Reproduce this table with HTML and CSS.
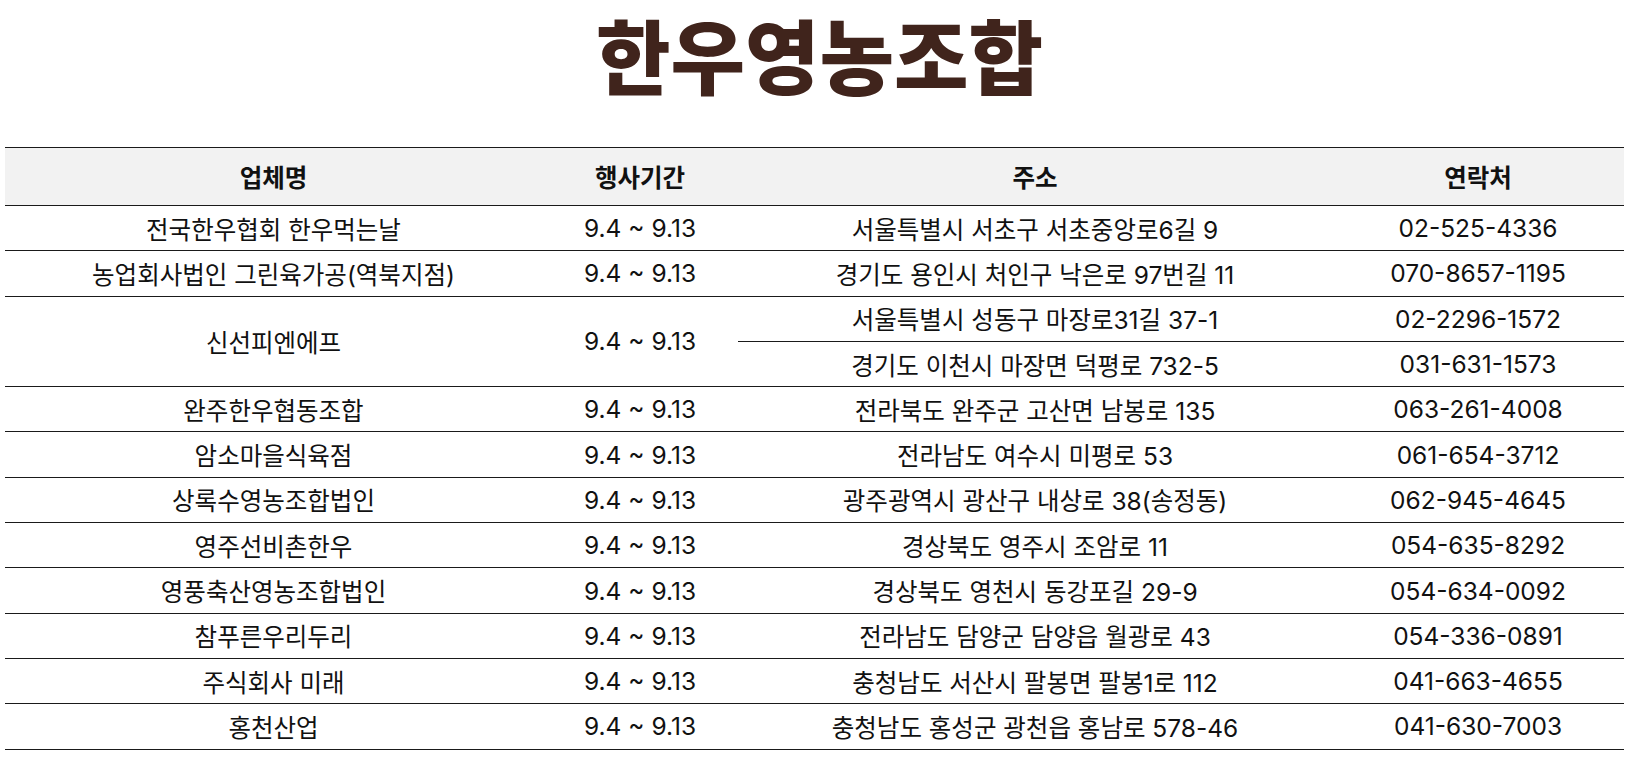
FILE: index.html
```html
<!DOCTYPE html>
<html lang="ko">
<head>
<meta charset="utf-8">
<title>한우영농조합</title>
<link rel="stylesheet" href="styles.css">
</head>
<body>
<div class="page">
  <h1 class="title">한우영농조합</h1>
  <table class="list">
    <colgroup>
      <col class="c-name">
      <col class="c-date">
      <col class="c-addr">
      <col class="c-tel">
    </colgroup>
    <thead>
      <tr><th>업체명</th><th>행사기간</th><th>주소</th><th>연락처</th></tr>
    </thead>
    <tbody>
      <tr><td>전국한우협회 한우먹는날</td><td>9.4 ~ 9.13</td><td>서울특별시 서초구 서초중앙로6길 9</td><td>02-525-4336</td></tr>
      <tr><td>농업회사법인 그린육가공(역북지점)</td><td>9.4 ~ 9.13</td><td>경기도 용인시 처인구 낙은로 97번길 11</td><td>070-8657-1195</td></tr>
      <tr><td rowspan="2">신선피엔에프</td><td rowspan="2">9.4 ~ 9.13</td><td>서울특별시 성동구 마장로31길 37-1</td><td>02-2296-1572</td></tr>
      <tr><td>경기도 이천시 마장면 덕평로 732-5</td><td>031-631-1573</td></tr>
      <tr><td>완주한우협동조합</td><td>9.4 ~ 9.13</td><td>전라북도 완주군 고산면 남봉로 135</td><td>063-261-4008</td></tr>
      <tr><td>암소마을식육점</td><td>9.4 ~ 9.13</td><td>전라남도 여수시 미평로 53</td><td>061-654-3712</td></tr>
      <tr><td>상록수영농조합법인</td><td>9.4 ~ 9.13</td><td>광주광역시 광산구 내상로 38(송정동)</td><td>062-945-4645</td></tr>
      <tr><td>영주선비촌한우</td><td>9.4 ~ 9.13</td><td>경상북도 영주시 조암로 11</td><td>054-635-8292</td></tr>
      <tr><td>영풍축산영농조합법인</td><td>9.4 ~ 9.13</td><td>경상북도 영천시 동강포길 29-9</td><td>054-634-0092</td></tr>
      <tr><td>참푸른우리두리</td><td>9.4 ~ 9.13</td><td>전라남도 담양군 담양읍 월광로 43</td><td>054-336-0891</td></tr>
      <tr><td>주식회사 미래</td><td>9.4 ~ 9.13</td><td>충청남도 서산시 팔봉면 팔봉1로 112</td><td>041-663-4655</td></tr>
      <tr><td>홍천산업</td><td>9.4 ~ 9.13</td><td>충청남도 홍성군 광천읍 홍남로 578-46</td><td>041-630-7003</td></tr>
    </tbody>
  </table>
</div>
</body>
</html>
```

FILE: styles.css
```css
html, body {
  margin: 0;
  padding: 0;
  background: #ffffff;
}

.page {
  padding: 0 14px 0 5px;
  font-family: Inter, "Noto Sans CJK KR", sans-serif;
  color: #111111;
}

.title {
  margin: 0 -4px 0 6px;
  padding-top: 4px;
  height: 147px;
  box-sizing: border-box;
  text-align: center;
  font-family: "Noto Sans CJK KR", sans-serif;
  font-weight: 900;
  font-size: 81px;
  line-height: 1.2;
  letter-spacing: 0px;
  color: #40241c;
}

.list {
  width: 100%;
  border-collapse: collapse;
  table-layout: fixed;
  font-size: 24.5px;
  letter-spacing: 0;
}

.c-name { width: 537px; }
.c-date { width: 196px; }
.c-addr { width: 594px; }
.c-tel  { width: 292px; }

.list th {
  background: #f2f2f2;
  height: 57px;
  padding: 0;
  font-weight: 700;
  text-align: center;
  border-top: 1px solid #1a1a1a;
  border-bottom: 1px solid #1a1a1a;
}

.list td {
  height: 44.3px;
  padding: 0;
  text-align: center;
  vertical-align: middle;
  border-bottom: 1px solid #1a1a1a;
  font-weight: 400;
}
```
